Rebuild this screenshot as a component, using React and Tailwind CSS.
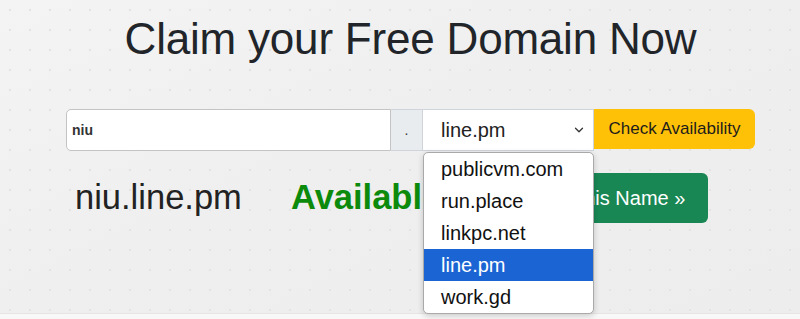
import { ChevronDown } from 'lucide-react';

const OPTIONS = ['publicvm.com', 'run.place', 'linkpc.net', 'line.pm', 'work.gd'];

export default function App() {
  return (
    <div className="w-[800px] h-[319px] overflow-hidden font-['Liberation_Sans',Arial,sans-serif] text-[#212529]">
      {/* hero */}
      <section className="relative h-[313px] bg-[#efefef] bg-[radial-gradient(circle,#e4e4e4_1px,transparent_1.6px),linear-gradient(155deg,#f4f4f4_0%,#efefef_45%,#ededed_100%)] bg-[length:20px_20px,100%_100%]">
        <div className="ml-[66px] w-[689px] pt-[12px]">
          <h1 className="text-center text-[44px] leading-[53px] font-normal tracking-[-0.2px]">
            Claim your Free Domain Now
          </h1>

          {/* search group */}
          <div className="mt-[44px] flex items-start h-[42px]">
            <div className="w-[325px] h-[42px] bg-white border border-[#c4c4c4] rounded-l-[5px] flex items-center pl-[5px] text-[14px] font-bold text-[#333]">
              niu
            </div>
            <div className="w-[31px] h-[42px] bg-[#e9ecef] border-y border-[#ced4da] flex items-center justify-center text-[14px] text-[#333]">
              .
            </div>
            <div className="w-[172px] h-[42px] bg-white border border-[#ced4da] flex items-center justify-between pl-[18px] pr-[7px] text-[20px] text-[#222]">
              <span>line.pm</span>
              <ChevronDown size={14} strokeWidth={2.2} className="text-[#333]" />
            </div>
            <button className="w-[161px] h-[40px] bg-[#ffc107] rounded-r-[6px] text-[17px] text-[#1c1c1c] flex items-center justify-center">
              Check Availability
            </button>
          </div>

          {/* result row */}
          <div className="mt-[22px] flex items-center h-[50px]">
            <div className="w-[225px] pl-[9px] text-[34.5px] text-[#222]">niu.line.pm</div>
            <div className="w-[214px] text-[34.5px] font-bold text-[#0c8a0c]">Available</div>
            <button className="h-[50px] pl-[17px] pr-[23px] bg-[#198754] rounded-[6px] text-white text-[20px]">
              Claim this Name »
            </button>
          </div>
        </div>

        {/* open select list */}
        <ul className="absolute left-[423px] top-[152px] w-[171px] bg-white border border-[#a9a9a9] rounded-[5px] shadow-[0_2px_6px_rgba(0,0,0,0.18)] overflow-hidden">
          {OPTIONS.map((o) => (
            <li
              key={o}
              className={`h-[32px] pl-[17px] flex items-center text-[20px] ${o === 'line.pm' ? 'bg-[#1a64d4] text-white' : 'text-[#111]'}`}
            >
              {o}
            </li>
          ))}
        </ul>
      </section>
      <div className="h-[6px] bg-[#f8f8f8] border-t border-[#e4e4e4]" />
    </div>
  );
}
